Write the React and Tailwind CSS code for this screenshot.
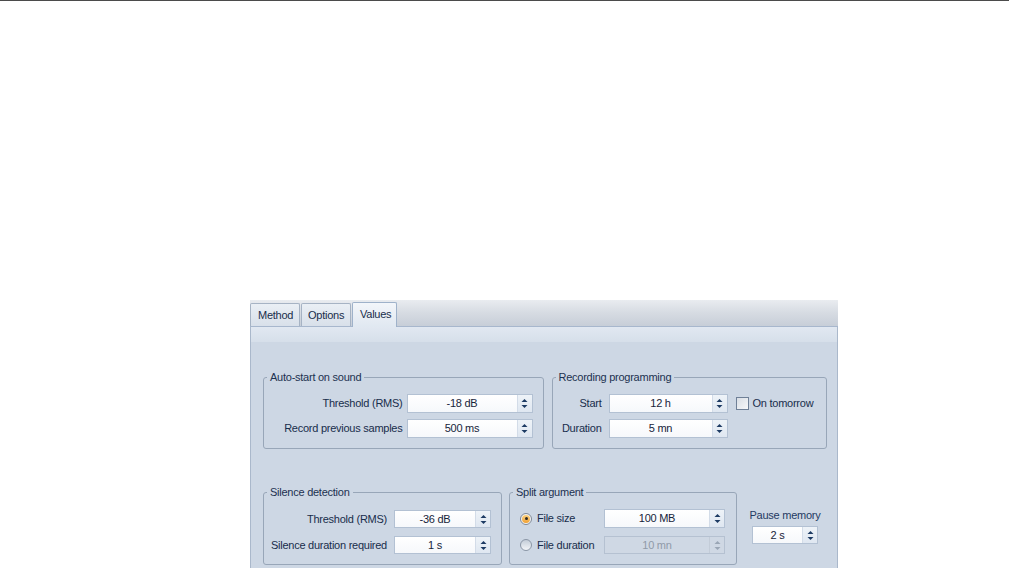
import React from "react";

function Arrows({ disabled }) {
  const c = disabled ? "#9aa6b5" : "#1d3b63";
  return (
    <svg width="7" height="11" viewBox="0 0 7 11">
      <path d="M0.5 4 L3.5 1 L6.5 4 Z" fill={c} />
      <path d="M0.5 7 L6.5 7 L3.5 10 Z" fill={c} />
    </svg>
  );
}

function Spin({ value, h = "h-[19px]", disabled }) {
  return (
    <div
      className={`flex ${h} w-full border ${
        disabled
          ? "border-[#b5c1d1] bg-[#cfd8e4] text-[#8f9aa8]"
          : "border-[#b3c1d3] bg-gradient-to-b from-white to-[#f6f8fb] text-[#17243a]"
      }`}
    >
      <div className="flex flex-1 items-center justify-center leading-none">{value}</div>
      <div
        className={`flex w-[15px] items-center justify-center border-l ${
          disabled
            ? "border-[#c3ccd8]"
            : "border-[#d3dce8] bg-gradient-to-b from-[#eef3f8] to-[#dfe7f1]"
        }`}
      >
        <Arrows disabled={disabled} />
      </div>
    </div>
  );
}

function Group({ title, className, children }) {
  return (
    <fieldset className={`rounded-[3px] border border-[#98a6b8] ${className}`}>
      <legend className="ml-[3px] px-[3px] leading-[13px] text-[#1c3150]">{title}</legend>
      {children}
    </fieldset>
  );
}

function Radio({ checked }) {
  return checked ? (
    <div className="flex h-[12px] w-[12px] items-center justify-center rounded-full border border-[#7e8794] bg-[#f4f4f4]">
      <div className="flex h-[8px] w-[8px] items-center justify-center rounded-full bg-gradient-to-b from-[#fbd27e] to-[#f0a030]">
        <div className="h-[3px] w-[3px] rounded-full bg-[#2e2a24]" />
      </div>
    </div>
  ) : (
    <div className="h-[12px] w-[12px] rounded-full border border-[#8a96a6] bg-gradient-to-b from-[#c4cdd8] to-[#f3f5f8]" />
  );
}

export default function App() {
  return (
    <div className="h-[568px] w-[1009px] overflow-hidden whitespace-nowrap border-t border-[#4b4b4b] bg-white font-['Liberation_Sans',Arial,sans-serif] text-[11px] tracking-[-0.25px] text-[#182d4b]">
      <div className="ml-[250px] mt-[299px] w-[588px]">
        {/* tab strip */}
        <div className="flex h-[27px] items-end gap-[1px] border-b border-[#a7b7cd] bg-gradient-to-b from-[#e9ecf0] via-[#d6dbe2] to-[#c7ced8]">
          <div className="flex h-[23px] w-[50px] items-center rounded-t-[2px] border border-b-0 border-[#a6b3c4] bg-gradient-to-b from-[#eaeff5] to-[#d8e0ea] pl-[7px] pt-[1px]">
            Method
          </div>
          <div className="flex h-[23px] w-[50px] items-center rounded-t-[2px] border border-b-0 border-[#a6b3c4] bg-gradient-to-b from-[#eaeff5] to-[#d8e0ea] pl-[6px] pt-[1px]">
            Options
          </div>
          <div className="-mb-px flex h-[25px] w-[45px] items-center rounded-t-[2px] border border-b-0 border-[#9fb2ca] bg-gradient-to-b from-[#f3f6fa] to-[#e0e8f1] pb-[2px] pl-[7px]">
            Values
          </div>
        </div>
        {/* body */}
        <div className="h-[241px] border-x border-[#aab8cb] bg-[#cdd7e4]">
          <div className="h-[15px] bg-gradient-to-b from-[#e1e8f1] to-[#d6dfea]" />
          <div className="pl-[12px] pr-[10px] pt-[29px]">
            <div className="flex items-start gap-[8px]">
              <Group title="Auto-start on sound" className="w-[281px]">
                <div className="grid grid-cols-[1fr_126px] items-center gap-x-[4px] gap-y-[6px] pb-[10px] pl-[8px] pr-[10px] pt-[10px]">
                  <div className="text-right">Threshold (RMS)</div>
                  <Spin value="-18 dB" />
                  <div className="text-right">Record previous samples</div>
                  <Spin value="500 ms" />
                </div>
              </Group>
              <Group title="Recording programming" className="w-[276px]">
                <div className="grid grid-cols-[42px_126px_auto] items-center gap-y-[6px] pb-[10px] pl-[7px] pt-[10px]">
                  <div className="text-right">Start</div>
                  <div className="ml-[7px]">
                    <Spin value="12 h" />
                  </div>
                  <div className="ml-[8px] flex items-center gap-[4px]">
                    <div className="h-[13px] w-[13px] border border-[#6f8097] bg-gradient-to-br from-[#d9dee5] to-[#f7f8fa]" />
                    <span>On tomorrow</span>
                  </div>
                  <div className="text-right">Duration</div>
                  <div className="ml-[7px]">
                    <Spin value="5 mn" />
                  </div>
                  <div />
                </div>
              </Group>
            </div>
            <div className="mt-[37px] flex items-start">
              <Group title="Silence detection" className="w-[239px]">
                <div className="grid grid-cols-[1fr_97px] items-center gap-x-[7px] gap-y-[8px] pb-[10px] pl-[4px] pr-[10px] pt-[11px]">
                  <div className="text-right">Threshold (RMS)</div>
                  <Spin value="-36 dB" h="h-[18px]" />
                  <div className="text-right">Silence duration required</div>
                  <Spin value="1 s" h="h-[18px]" />
                </div>
              </Group>
              <Group title="Split argument" className="ml-[7px] w-[228px]">
                <div className="grid grid-cols-[84px_121px] items-center gap-y-[8px] pb-[10px] pl-[10px] pt-[10px]">
                  <div className="flex items-center gap-[5px]">
                    <Radio checked />
                    <span>File size</span>
                  </div>
                  <Spin value="100 MB" />
                  <div className="flex items-center gap-[5px]">
                    <Radio />
                    <span>File duration</span>
                  </div>
                  <Spin value="10 mn" h="h-[18px]" disabled />
                </div>
              </Group>
              <div className="ml-[15px] flex w-[66px] flex-col items-center pt-[23px]">
                <div className="leading-[13px] text-[#1f3a62]">Pause memory</div>
                <div className="mt-[4px] w-full">
                  <Spin value="2 s" h="h-[18px]" />
                </div>
              </div>
            </div>
          </div>
        </div>
      </div>
    </div>
  );
}
